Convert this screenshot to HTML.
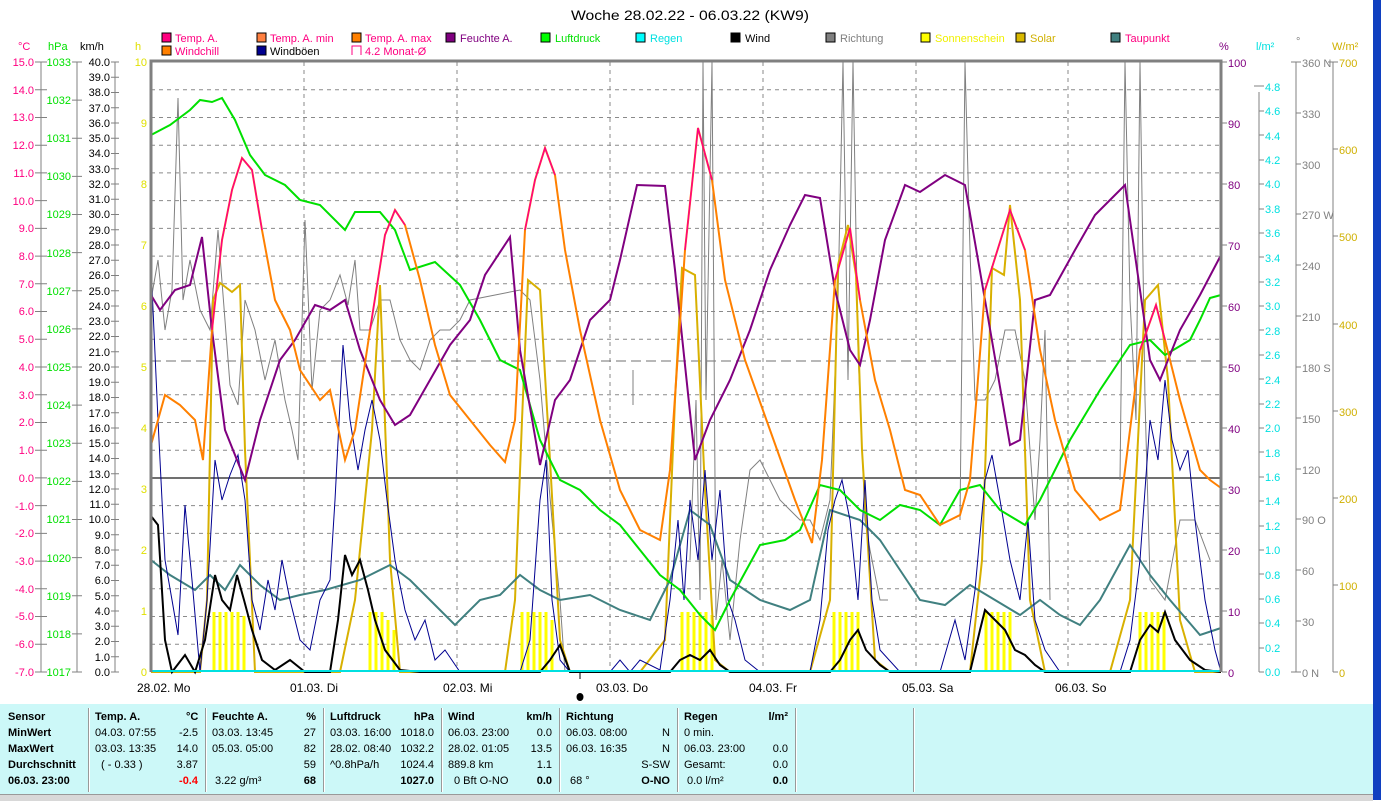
<!DOCTYPE html>
<html><head><meta charset="utf-8">
<style>
html,body{margin:0;padding:0;background:#fff;}
body{width:1381px;height:800px;overflow:hidden;position:relative;font-family:"Liberation Sans",sans-serif;}
svg{position:absolute;left:0;top:0;}
text{font-family:"Liberation Sans",sans-serif;}
.tbl{position:absolute;left:0;top:704px;width:1373px;height:90px;background:#ccf8f8;font-size:11px;}
.sep{position:absolute;top:4px;width:1px;height:84px;background:#999;border-right:1px solid #fff;}
.r{position:absolute;white-space:nowrap;}
.b{font-weight:bold;}
.status{position:absolute;left:0;top:794px;width:1373px;height:6px;background:#d8d8d8;border-top:1px solid #999;}
.blue{position:absolute;left:1373px;top:0;width:8px;height:800px;background:#1040c0;}
</style></head><body>
<svg width="1381" height="800" xmlns="http://www.w3.org/2000/svg">
<text x="690" y="20" font-size="14" text-anchor="middle" fill="#000" textLength="238" lengthAdjust="spacingAndGlyphs">Woche 28.02.22 - 06.03.22 (KW9)</text>
<g font-size="11">
<rect x="162" y="33" width="9" height="9" fill="#ff0080" stroke="#000"/><text x="175" y="42" fill="#ff0080">Temp. A.</text>
<rect x="257" y="33" width="9" height="9" fill="#ff8040" stroke="#000"/><text x="270" y="42" fill="#ff0080">Temp. A. min</text>
<rect x="352" y="33" width="9" height="9" fill="#ff8000" stroke="#000"/><text x="365" y="42" fill="#ff0080">Temp. A. max</text>
<rect x="446" y="33" width="9" height="9" fill="#800080" stroke="#000"/><text x="460" y="42" fill="#800080">Feuchte A.</text>
<rect x="541" y="33" width="9" height="9" fill="#00ff00" stroke="#000"/><text x="555" y="42" fill="#00e000">Luftdruck</text>
<rect x="636" y="33" width="9" height="9" fill="#00ffff" stroke="#000"/><text x="650" y="42" fill="#00e0e0">Regen</text>
<rect x="731" y="33" width="9" height="9" fill="#000" stroke="#000"/><text x="745" y="42" fill="#000">Wind</text>
<rect x="826" y="33" width="9" height="9" fill="#808080" stroke="#000"/><text x="840" y="42" fill="#808080">Richtung</text>
<rect x="921" y="33" width="9" height="9" fill="#ffff00" stroke="#000"/><text x="935" y="42" fill="#f0f000">Sonnenschein</text>
<rect x="1016" y="33" width="9" height="9" fill="#d8b800" stroke="#000"/><text x="1030" y="42" fill="#d0b000">Solar</text>
<rect x="1111" y="33" width="9" height="9" fill="#408080" stroke="#000"/><text x="1125" y="42" fill="#ff0080">Taupunkt</text>
<rect x="162" y="46" width="9" height="9" fill="#ff8000" stroke="#000"/><text x="175" y="55" fill="#ff0080">Windchill</text>
<rect x="257" y="46" width="9" height="9" fill="#000090" stroke="#000"/><text x="270" y="55" fill="#000">Windböen</text>
<path d="M352 55V46h9v9" fill="none" stroke="#ff0080"/><text x="365" y="55" fill="#ff0080">4.2 Monat-Ø</text>
</g>
<g font-size="11">
<text x="18" y="50" fill="#ff0080">°C</text><text x="48" y="50" fill="#00e000">hPa</text><text x="80" y="50" fill="#000">km/h</text><text x="135" y="50" fill="#e0e000">h</text>
<text x="1219" y="50" fill="#800080">%</text><text x="1256" y="50" fill="#00e0e0">l/m²</text><text x="1296" y="45" fill="#808080">°</text><text x="1332" y="50" fill="#d0b000">W/m²</text>
</g>
<g stroke="#8a8a8a" stroke-dasharray="4,4" stroke-width="1">
<line x1="151" y1="89.7" x2="1221" y2="89.7"/><line x1="151" y1="117.5" x2="1221" y2="117.5"/><line x1="151" y1="145.2" x2="1221" y2="145.2"/><line x1="151" y1="172.9" x2="1221" y2="172.9"/><line x1="151" y1="200.6" x2="1221" y2="200.6"/><line x1="151" y1="228.4" x2="1221" y2="228.4"/><line x1="151" y1="256.1" x2="1221" y2="256.1"/><line x1="151" y1="283.8" x2="1221" y2="283.8"/><line x1="151" y1="311.5" x2="1221" y2="311.5"/><line x1="151" y1="339.3" x2="1221" y2="339.3"/><line x1="151" y1="394.7" x2="1221" y2="394.7"/><line x1="151" y1="422.5" x2="1221" y2="422.5"/><line x1="151" y1="450.2" x2="1221" y2="450.2"/><line x1="151" y1="505.6" x2="1221" y2="505.6"/><line x1="151" y1="533.4" x2="1221" y2="533.4"/><line x1="151" y1="561.1" x2="1221" y2="561.1"/><line x1="151" y1="588.8" x2="1221" y2="588.8"/><line x1="151" y1="616.5" x2="1221" y2="616.5"/><line x1="151" y1="644.3" x2="1221" y2="644.3"/>
<line x1="304" y1="62" x2="304" y2="672"/><line x1="457" y1="62" x2="457" y2="672"/><line x1="610" y1="62" x2="610" y2="672"/><line x1="763" y1="62" x2="763" y2="672"/><line x1="916" y1="62" x2="916" y2="672"/><line x1="1068" y1="62" x2="1068" y2="672"/>
</g>
<line x1="151" y1="478" x2="1221" y2="478" stroke="#707070" stroke-width="2"/>
<line x1="151" y1="361" x2="1221" y2="361" stroke="#707070" stroke-dasharray="10,5"/>
<g stroke="#ffff00" stroke-width="3">
<path d="M214 672V612M220 672V612M226 672V612M232 672V612M238 672V612M244 672V616M370 672V612M376 672V612M382 672V612M388 672V620M394 672V630M522 672V612M528 672V612M534 672V612M540 672V612M546 672V612M552 672V620M682 672V612M688 672V612M694 672V612M700 672V612M706 672V612M712 672V615M834 672V612M840 672V612M846 672V612M852 672V612M858 672V612M986 672V612M992 672V612M998 672V612M1004 672V612M1010 672V612M1140 672V612M1146 672V612M1152 672V612M1158 672V612M1164 672V612"/>
</g>
<polyline fill="none" stroke="#808080" stroke-width="1" points="151,300 158,260 165,330 172,290 178,98 183,300 190,260 200,310 210,330 218,230 230,385 238,405 245,300 255,330 265,380 275,340 285,400 292,430 298,460 305,220 312,390 320,310 330,300 340,275 348,305 355,260 360,330 370,330 380,300 390,300 400,340 410,360 420,370 430,340 440,330 450,330 460,320 470,300 520,290 530,300 540,380 545,440 552,520 560,600 565,672"/>
<polyline fill="none" stroke="#808080" points="633,370 633,405"/>
<polyline fill="none" stroke="#808080" points="690,560 696,400 700,600 703,62 706,400 712,62 716,620 722,560 730,640 740,540 750,470 760,460 770,480 780,500 790,510 800,520 810,520 820,540 830,500 838,300 843,62 848,380 853,62 858,350 865,520 870,550 880,600 888,600"/>
<polyline fill="none" stroke="#808080" points="960,520 965,62 970,250 975,400 985,400 995,380 1005,330 1015,330 1025,380 1035,520 1040,440 1045,330 1050,600"/>
<polyline fill="none" stroke="#808080" points="1120,480 1125,62 1130,300 1136,420 1140,62 1145,400 1150,580 1165,600 1180,520 1195,520 1210,560"/>
<polyline fill="none" stroke="#d8b000" stroke-width="2" points="151,672 200,672 207,600 213,300 220,283 232,292 240,285 245,450 255,672 340,672 355,600 365,500 372,430 380,285 390,560 400,672 505,672 515,600 522,420 528,280 540,290 550,460 560,640 570,672 640,672 665,640 675,400 682,268 695,275 705,490 715,660 730,672 810,672 830,600 838,265 848,225 856,275 862,450 875,660 890,672 970,672 982,560 992,268 1004,275 1010,205 1020,300 1030,600 1045,672 1110,672 1130,600 1145,300 1158,285 1168,380 1180,620 1195,672 1221,672"/>
<polyline fill="none" stroke="#408080" stroke-width="2" points="151,560 170,575 195,590 210,575 225,590 240,565 260,585 280,600 300,595 325,590 360,580 390,565 410,580 430,600 455,625 480,600 500,595 520,575 540,590 560,600 590,595 620,610 650,620 670,580 690,510 710,525 730,580 760,600 790,610 810,600 830,510 860,520 880,540 900,570 920,600 945,605 970,585 995,600 1020,615 1040,600 1060,615 1080,625 1100,600 1130,545 1150,575 1170,600 1200,635 1221,628"/>
<polyline fill="none" stroke="#000090" stroke-width="1" points="151,265 158,420 165,560 172,600 178,635 185,505 192,580 200,672 207,600 215,460 222,500 230,475 238,455 245,500 252,600 260,630 268,580 275,610 282,560 290,600 300,640 310,650 320,600 330,580 335,500 343,345 350,420 358,470 365,430 372,400 380,440 387,500 395,560 405,610 415,640 425,620 435,660 445,650 460,672 520,672 530,640 540,500 546,460 552,600 560,660 570,672 610,672 620,660 630,672 640,660 660,670 670,600 678,520 684,600 690,500 698,560 705,470 712,560 720,490 728,600 735,620 745,660 760,672 810,672 820,620 828,530 835,500 842,480 850,520 858,600 865,480 872,600 880,650 900,672 940,672 955,620 965,660 975,590 985,480 992,455 1000,500 1010,560 1020,600 1028,520 1035,620 1045,650 1060,672 1120,672 1130,640 1140,560 1150,420 1158,460 1165,380 1172,440 1180,470 1188,450 1195,520 1205,600 1215,650 1221,672"/>
<polyline fill="none" stroke="#000" stroke-width="2" points="151,516 158,525 165,640 172,672 185,655 195,672 205,640 215,575 222,600 230,610 237,575 244,600 252,630 262,660 275,670 290,660 305,672 330,672 338,620 345,555 352,575 360,560 368,590 375,620 385,650 400,670 420,672 540,672 550,660 560,645 570,672 670,672 680,660 690,655 700,660 710,650 720,665 730,672 830,672 840,660 850,640 858,630 866,650 880,665 890,672 970,672 980,630 985,610 995,620 1005,630 1015,650 1025,655 1035,665 1045,672 1130,672 1140,640 1150,625 1158,632 1165,612 1175,640 1190,660 1205,670 1221,672"/>
<polyline fill="none" stroke="#00e000" stroke-width="2" points="151,135 170,125 190,110 200,100 212,102 222,98 235,120 250,155 265,175 285,185 300,200 320,205 345,230 355,212 380,212 395,230 410,270 435,262 460,285 480,320 500,360 520,370 540,440 560,480 580,490 600,510 620,525 640,550 660,575 680,590 700,615 715,630 730,600 760,545 785,540 800,530 820,485 840,490 860,510 880,520 900,505 920,510 940,525 960,490 980,485 1000,510 1025,525 1040,500 1070,440 1100,390 1130,345 1150,340 1165,355 1190,340 1200,320 1210,298 1221,295"/>
<polyline fill="none" stroke="#800080" stroke-width="2" points="151,295 160,310 175,290 190,285 202,237 212,330 225,430 245,480 260,420 280,360 295,340 315,305 330,310 345,300 360,350 380,400 395,425 410,415 430,380 450,345 470,320 485,275 510,237 520,350 540,465 555,400 570,380 590,320 610,300 620,260 637,185 665,186 675,270 695,460 710,420 730,380 750,330 770,270 790,225 805,195 820,198 835,290 850,350 860,365 870,320 885,240 905,185 920,192 945,175 965,185 985,300 1010,445 1020,440 1035,300 1050,295 1075,250 1095,215 1115,195 1125,185 1135,255 1150,360 1160,380 1180,330 1200,295 1221,255"/>
<polyline fill="none" stroke="#ff8000" stroke-width="2" points="151,445 165,395 180,405 195,420 203,460 212,330 222,240 232,190 242,158 252,170 262,230 275,300 290,330 300,370 310,385 320,400 330,390 345,460 355,430 370,330 385,235 395,210 405,225 420,280 435,345 450,395 470,420 490,445 505,462 515,420 525,230 535,180 545,148 555,175 565,250 580,330 600,420 620,490 640,530 660,540 670,470 685,250 698,128 712,180 725,280 745,360 770,430 795,500 812,543 822,460 835,280 850,228 860,300 875,380 890,430 905,490 920,495 940,525 960,515 970,480 985,290 1010,210 1025,250 1040,350 1055,420 1075,490 1100,520 1120,510 1140,350 1156,305 1165,340 1180,400 1200,470 1210,480 1221,488"/>
<g fill="none" stroke="#ff0080" stroke-width="1.5">
<polyline points="212,330 222,240 232,190 242,158 252,170 262,230"/>
<polyline points="370,330 385,235 395,210 405,225"/>
<polyline points="525,230 535,180 545,148 555,175"/>
<polyline points="685,250 698,128 712,180"/>
<polyline points="835,280 850,228 860,300"/>
<polyline points="985,290 1010,210 1025,250"/>
<polyline points="1140,350 1156,305 1165,340"/>
</g>
<line x1="151" y1="671" x2="1221" y2="671" stroke="#00e0e0" stroke-width="2"/>
<path d="M151 672V61H1221V672" fill="none" stroke="#808080" stroke-width="3"/>
<g stroke="#808080" fill="none">
<path d="M41 62V672M77 62V672M115 62V672"/>
<path d="M35 62h12M35 89.7h12M35 117.5h12M35 145.2h12M35 172.9h12M35 200.6h12M35 228.4h12M35 256.1h12M35 283.8h12M35 311.5h12M35 339.3h12M35 367h12M35 394.7h12M35 422.5h12M35 450.2h12M35 477.9h12M35 505.6h12M35 533.4h12M35 561.1h12M35 588.8h12M35 616.5h12M35 644.3h12M35 672h12"/>
<path d="M72 62h10M72 100.1h10M72 138.3h10M72 176.4h10M72 214.5h10M72 252.6h10M72 290.8h10M72 328.9h10M72 367h10M72 405.1h10M72 443.3h10M72 481.4h10M72 519.5h10M72 557.6h10M72 595.8h10M72 633.9h10M72 672h10"/>
<path d="M111 62h8M111 77.25h8M111 92.5h8M111 107.75h8M111 123h8M111 138.25h8M111 153.5h8M111 168.75h8M111 184h8M111 199.25h8M111 214.5h8M111 229.75h8M111 245h8M111 260.25h8M111 275.5h8M111 290.75h8M111 306h8M111 321.25h8M111 336.5h8M111 351.75h8M111 367h8M111 382.25h8M111 397.5h8M111 412.75h8M111 428h8M111 443.25h8M111 458.5h8M111 473.75h8M111 489h8M111 504.25h8M111 519.5h8M111 534.75h8M111 550h8M111 565.25h8M111 580.5h8M111 595.75h8M111 611h8M111 626.25h8M111 641.5h8M111 656.75h8M111 672h8"/>
</g>
<g font-size="11" fill="#ff0080" text-anchor="end">
<text x="34" y="66">15.0</text><text x="34" y="94">14.0</text><text x="34" y="121">13.0</text><text x="34" y="149">12.0</text><text x="34" y="177">11.0</text><text x="34" y="205">10.0</text><text x="34" y="232">9.0</text><text x="34" y="260">8.0</text><text x="34" y="288">7.0</text><text x="34" y="315">6.0</text><text x="34" y="343">5.0</text><text x="34" y="371">4.0</text><text x="34" y="399">3.0</text><text x="34" y="426">2.0</text><text x="34" y="454">1.0</text><text x="34" y="482">0.0</text><text x="34" y="510">-1.0</text><text x="34" y="537">-2.0</text><text x="34" y="565">-3.0</text><text x="34" y="593">-4.0</text><text x="34" y="620">-5.0</text><text x="34" y="648">-6.0</text><text x="34" y="676">-7.0</text>
</g>
<g font-size="11" fill="#00e000" text-anchor="end">
<text x="71" y="66">1033</text><text x="71" y="104">1032</text><text x="71" y="142">1031</text><text x="71" y="180">1030</text><text x="71" y="218">1029</text><text x="71" y="257">1028</text><text x="71" y="295">1027</text><text x="71" y="333">1026</text><text x="71" y="371">1025</text><text x="71" y="409">1024</text><text x="71" y="447">1023</text><text x="71" y="485">1022</text><text x="71" y="523">1021</text><text x="71" y="562">1020</text><text x="71" y="600">1019</text><text x="71" y="638">1018</text><text x="71" y="676">1017</text>
</g>
<g font-size="11" fill="#000" text-anchor="end">
<text x="110" y="66">40.0</text><text x="110" y="81">39.0</text><text x="110" y="96">38.0</text><text x="110" y="112">37.0</text><text x="110" y="127">36.0</text><text x="110" y="142">35.0</text><text x="110" y="157">34.0</text><text x="110" y="173">33.0</text><text x="110" y="188">32.0</text><text x="110" y="203">31.0</text><text x="110" y="218">30.0</text><text x="110" y="234">29.0</text><text x="110" y="249">28.0</text><text x="110" y="264">27.0</text><text x="110" y="279">26.0</text><text x="110" y="295">25.0</text><text x="110" y="310">24.0</text><text x="110" y="325">23.0</text><text x="110" y="340">22.0</text><text x="110" y="356">21.0</text><text x="110" y="371">20.0</text><text x="110" y="386">19.0</text><text x="110" y="401">18.0</text><text x="110" y="417">17.0</text><text x="110" y="432">16.0</text><text x="110" y="447">15.0</text><text x="110" y="462">14.0</text><text x="110" y="478">13.0</text><text x="110" y="493">12.0</text><text x="110" y="508">11.0</text><text x="110" y="523">10.0</text><text x="110" y="539">9.0</text><text x="110" y="554">8.0</text><text x="110" y="569">7.0</text><text x="110" y="584">6.0</text><text x="110" y="600">5.0</text><text x="110" y="615">4.0</text><text x="110" y="630">3.0</text><text x="110" y="645">2.0</text><text x="110" y="661">1.0</text><text x="110" y="676">0.0</text>
</g>
<g font-size="11" fill="#e0e000" text-anchor="end">
<text x="147" y="66">10</text><text x="147" y="127">9</text><text x="147" y="188">8</text><text x="147" y="249">7</text><text x="147" y="310">6</text><text x="147" y="371">5</text><text x="147" y="432">4</text><text x="147" y="493">3</text><text x="147" y="554">2</text><text x="147" y="615">1</text><text x="147" y="676">0</text>
</g>
<g stroke="#808080" fill="none">
<path d="M1222 62h5M1222 123h5M1222 184h5M1222 245h5M1222 306h5M1222 367h5M1222 428h5M1222 489h5M1222 550h5M1222 611h5M1222 672h5"/>
<path d="M1259 92V672M1254 86h10M1259 111h5M1259 135h5M1259 160h5M1259 184h5M1259 209h5M1259 233h5M1259 257h5M1259 282h5M1259 306h5M1259 330h5M1259 355h5M1259 379h5M1259 404h5M1259 428h5M1259 452h5M1259 477h5M1259 501h5M1259 526h5M1259 550h5M1259 574h5M1259 599h5M1259 623h5M1259 648h5M1259 672h5"/>
<path d="M1296 62V672M1291 62h10M1296 113h5M1296 164h5M1296 214h5M1296 265h5M1296 316h5M1296 367h5M1296 418h5M1296 469h5M1296 519h5M1296 570h5M1296 621h5M1291 672h10"/>
<path d="M1333 62V672M1328 62h10M1333 149h5M1333 236h5M1333 324h5M1333 411h5M1333 498h5M1333 585h5M1333 672h5"/>
</g>
<g font-size="11" fill="#800080">
<text x="1228" y="67">100</text><text x="1228" y="128">90</text><text x="1228" y="189">80</text><text x="1228" y="250">70</text><text x="1228" y="311">60</text><text x="1228" y="372">50</text><text x="1228" y="433">40</text><text x="1228" y="494">30</text><text x="1228" y="555">20</text><text x="1228" y="616">10</text><text x="1228" y="677">0</text>
</g>
<g font-size="11" fill="#00e0e0">
<text x="1265" y="91">4.8</text><text x="1265" y="115">4.6</text><text x="1265" y="140">4.4</text><text x="1265" y="164">4.2</text><text x="1265" y="188">4.0</text><text x="1265" y="213">3.8</text><text x="1265" y="237">3.6</text><text x="1265" y="262">3.4</text><text x="1265" y="286">3.2</text><text x="1265" y="310">3.0</text><text x="1265" y="335">2.8</text><text x="1265" y="359">2.6</text><text x="1265" y="384">2.4</text><text x="1265" y="408">2.2</text><text x="1265" y="432">2.0</text><text x="1265" y="457">1.8</text><text x="1265" y="481">1.6</text><text x="1265" y="505">1.4</text><text x="1265" y="530">1.2</text><text x="1265" y="554">1.0</text><text x="1265" y="579">0.8</text><text x="1265" y="603">0.6</text><text x="1265" y="627">0.4</text><text x="1265" y="652">0.2</text><text x="1265" y="676">0.0</text>
</g>
<g font-size="11" fill="#808080">
<text x="1302" y="67">360 N</text><text x="1302" y="118">330</text><text x="1302" y="169">300</text><text x="1302" y="219">270 W</text><text x="1302" y="270">240</text><text x="1302" y="321">210</text><text x="1302" y="372">180 S</text><text x="1302" y="423">150</text><text x="1302" y="474">120</text><text x="1302" y="524">90 O</text><text x="1302" y="575">60</text><text x="1302" y="626">30</text><text x="1302" y="677">0 N</text>
</g>
<g font-size="11" fill="#d0b000">
<text x="1339" y="67">700</text><text x="1339" y="154">600</text><text x="1339" y="241">500</text><text x="1339" y="329">400</text><text x="1339" y="416">300</text><text x="1339" y="503">200</text><text x="1339" y="590">100</text><text x="1339" y="677">0</text>
</g>
<g font-size="12" fill="#000">
<text x="137" y="692">28.02.  Mo</text><text x="290" y="692">01.03.  Di</text><text x="443" y="692">02.03.  Mi</text><text x="596" y="692">03.03.  Do</text><text x="749" y="692">04.03.  Fr</text><text x="902" y="692">05.03.  Sa</text><text x="1055" y="692">06.03.  So</text>
</g>
<line x1="580" y1="672" x2="580" y2="679" stroke="#000"/>
<ellipse cx="580" cy="697" rx="3.5" ry="4" fill="#000"/>
</svg>
<div class="tbl">
 <div class="sep" style="left:88px"></div><div class="sep" style="left:205px"></div><div class="sep" style="left:323px"></div><div class="sep" style="left:441px"></div><div class="sep" style="left:559px"></div><div class="sep" style="left:677px"></div><div class="sep" style="left:795px"></div><div class="sep" style="left:913px"></div>
 <div class="r b" style="left:8px;top:7px">Sensor</div><div class="r b" style="left:8px;top:23px">MinWert</div><div class="r b" style="left:8px;top:39px">MaxWert</div><div class="r b" style="left:8px;top:55px">Durchschnitt</div><div class="r b" style="left:8px;top:71px">06.03. 23:00</div>
 <div class="r b" style="left:95px;top:7px">Temp. A.</div><div class="r b" style="left:186px;top:7px">°C</div>
 <div class="r" style="left:95px;top:23px">04.03.  07:55</div><div class="r" style="right:1175px;top:23px">-2.5</div>
 <div class="r" style="left:95px;top:39px">03.03.  13:35</div><div class="r" style="right:1175px;top:39px">14.0</div>
 <div class="r" style="left:101px;top:55px">( - 0.33 )</div><div class="r" style="right:1175px;top:55px">3.87</div>
 <div class="r b" style="right:1175px;top:71px;color:#f00">-0.4</div>
 <div class="r b" style="left:212px;top:7px">Feuchte A.</div><div class="r b" style="right:1057px;top:7px">%</div>
 <div class="r" style="left:212px;top:23px">03.03.  13:45</div><div class="r" style="right:1057px;top:23px">27</div>
 <div class="r" style="left:212px;top:39px">05.03.  05:00</div><div class="r" style="right:1057px;top:39px">82</div>
 <div class="r" style="right:1057px;top:55px">59</div>
 <div class="r" style="left:215px;top:71px">3.22 g/m³</div><div class="r b" style="right:1057px;top:71px">68</div>
 <div class="r b" style="left:330px;top:7px">Luftdruck</div><div class="r b" style="right:939px;top:7px">hPa</div>
 <div class="r" style="left:330px;top:23px">03.03.  16:00</div><div class="r" style="right:939px;top:23px">1018.0</div>
 <div class="r" style="left:330px;top:39px">28.02.  08:40</div><div class="r" style="right:939px;top:39px">1032.2</div>
 <div class="r" style="left:330px;top:55px">^0.8hPa/h</div><div class="r" style="right:939px;top:55px">1024.4</div>
 <div class="r b" style="right:939px;top:71px">1027.0</div>
 <div class="r b" style="left:448px;top:7px">Wind</div><div class="r b" style="right:821px;top:7px">km/h</div>
 <div class="r" style="left:448px;top:23px">06.03.  23:00</div><div class="r" style="right:821px;top:23px">0.0</div>
 <div class="r" style="left:448px;top:39px">28.02.  01:05</div><div class="r" style="right:821px;top:39px">13.5</div>
 <div class="r" style="left:448px;top:55px">889.8 km</div><div class="r" style="right:821px;top:55px">1.1</div>
 <div class="r" style="left:454px;top:71px">0 Bft O-NO</div><div class="r b" style="right:821px;top:71px">0.0</div>
 <div class="r b" style="left:566px;top:7px">Richtung</div>
 <div class="r" style="left:566px;top:23px">06.03.  08:00</div><div class="r" style="right:703px;top:23px">N</div>
 <div class="r" style="left:566px;top:39px">06.03.  16:35</div><div class="r" style="right:703px;top:39px">N</div>
 <div class="r" style="right:703px;top:55px">S-SW</div>
 <div class="r" style="left:570px;top:71px">68 °</div><div class="r b" style="right:703px;top:71px">O-NO</div>
 <div class="r b" style="left:684px;top:7px">Regen</div><div class="r b" style="right:585px;top:7px">l/m²</div>
 <div class="r" style="left:684px;top:23px">0 min.</div>
 <div class="r" style="left:684px;top:39px">06.03.  23:00</div><div class="r" style="right:585px;top:39px">0.0</div>
 <div class="r" style="left:684px;top:55px">Gesamt:</div><div class="r" style="right:585px;top:55px">0.0</div>
 <div class="r" style="left:687px;top:71px">0.0 l/m²</div><div class="r b" style="right:585px;top:71px">0.0</div>
</div>
<div class="status"></div>
<div class="blue"></div>
</body></html>
